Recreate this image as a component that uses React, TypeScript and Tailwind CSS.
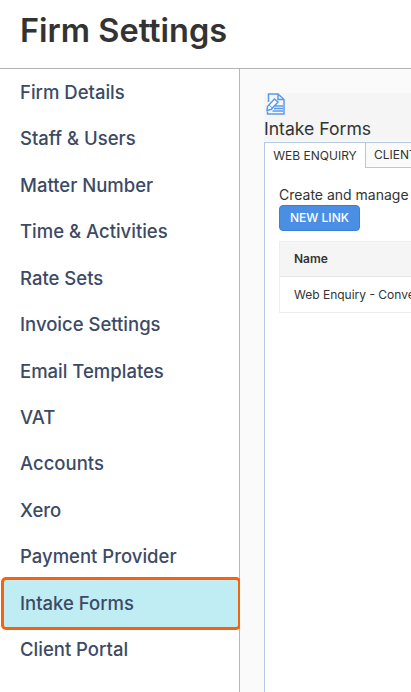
const menuItems = [
  "Firm Details",
  "Staff & Users",
  "Matter Number",
  "Time & Activities",
  "Rate Sets",
  "Invoice Settings",
  "Email Templates",
  "VAT",
  "Accounts",
  "Xero",
  "Payment Provider",
  "Intake Forms",
  "Client Portal",
]

function FormIcon() {
  return (
    <svg width="20" height="22" viewBox="0 0 20 22" fill="none" stroke="#5c9ae8" strokeWidth="1.5" className="block">
      <path d="M2.500 9V1h9.500l6 5.500V21H1.500v-2.500" />
      <path d="M12 1v5.500h6" />
      <path d="M1.500 13.500l7-7.500 3.500 3-7 7.500-4 1z" fill="#ffffff" />
      <path d="M3 12l3.500 3" strokeWidth="1" />
      <path d="M9 13h8M8 15.500h9M6.500 18h10.500" strokeWidth="1.600" />
    </svg>
  )
}

export default function App() {
  return (
    <div className="flex h-[692px] w-[411px] flex-col overflow-hidden bg-white font-['Inter',sans-serif]">
      <header className="flex h-[69px] shrink-0 items-center border-b border-[#b3b3b3] px-5 pb-[6px]">
        <h1 className="text-[32.5px] font-semibold text-[#333333]">Firm Settings</h1>
      </header>
      <div className="flex flex-1">
        <nav className="w-[240px] shrink-0 border-r border-[#b8b8b8] pt-[0.6px]">
          {menuItems.map((item) => (
            <div
              key={item}
              className={
                item === "Intake Forms"
                  ? "ml-[3.5px] mr-[1px] flex h-[46.45px] items-center rounded-[2px] bg-[#c0ecf3] pl-[16.5px] text-[18.5px] font-[450] text-[#3c4a66] outline-[3px] outline-[#f7630c]"
                  : "flex h-[46.45px] items-center pl-5 text-[18.5px] font-[450] text-[#3c4a66]"
              }
            >
              {item}
            </div>
          ))}
        </nav>
        <main className="min-w-0 flex-1 overflow-hidden bg-[#fafafa] pl-6 pt-6">
          <div className="w-[400px] bg-[#f5f5f5]">
            <div className="pl-[2px]">
              <FormIcon />
            </div>
            <h2 className="mb-[1px] mt-[2px] text-[17.6px] leading-[24px] text-[#333333]">Intake Forms</h2>
          </div>
          <div className="flex h-[26px] w-[400px] whitespace-nowrap text-[12px] text-[#333333]">
            <div className="flex w-[102px] items-center justify-center border border-b-0 border-[#b4c8df] bg-white">WEB ENQUIRY</div>
            <div className="flex w-[110px] items-center border-t border-b border-r border-[#b4c8df] pl-2">CLIENT PORTAL</div>
          </div>
          <div className="h-[600px] w-[400px] border-l border-[#b4c8df] bg-white pl-[14px] pt-[17px]">
            <p className="whitespace-nowrap text-[14px] leading-[19px] text-[#333333]">Create and manage links</p>
            <button className="mt-[1px] block h-[26px] w-[81px] rounded-[4px] border border-[#3b7fd9] bg-[#4a8fe4] text-[12px] font-medium text-white">NEW LINK</button>
            <div className="mt-[10px] border border-[#eeeeee] text-[12px] text-[#333333]">
              <div className="flex h-[35px] items-center border-b border-[#e6e6e6] bg-[#f5f5f5] pl-[14px] font-semibold">Name</div>
              <div className="flex h-[35px] items-center whitespace-nowrap pl-[14px]">Web Enquiry - Conversion Form</div>
            </div>
          </div>
        </main>
      </div>
    </div>
  )
}
